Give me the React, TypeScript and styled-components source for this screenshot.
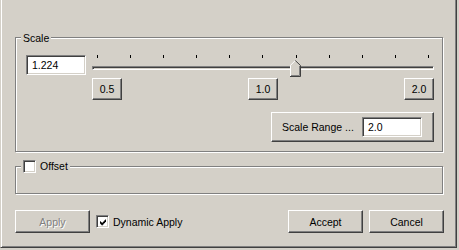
import React from 'react';
import styled, { createGlobalStyle } from 'styled-components';

const GlobalStyle = createGlobalStyle`
    html, body {
        margin: 0;
        padding: 0;
        background: #d4d0c8;
    }
    body {
        font-family: "Liberation Sans", Arial, sans-serif;
        font-size: 10.5px;
        color: #000;
    }
`;

const Frame = styled.div`
    box-sizing: border-box;
    width: 457px;
    height: 248px;
    border-left: 1px solid #d4d0c8;
    border-right: 1px solid #404040;
    border-bottom: 1px solid #404040;
    box-shadow: inset 1px 0 #fff, inset -1px -1px #808080;
    padding: 37px 0 0 14px;
`;

const Group = styled.div<{ $height?: number; $mt?: number }>`
    position: relative;
    box-sizing: border-box;
    width: 428px;
    height: ${(p) => (p.$height ? `${p.$height}px` : 'auto')};
    margin-top: ${(p) => p.$mt || 0}px;
    border: 1px solid #808080;
    box-shadow: 1px 1px 0 #fff, inset 1px 1px 0 #fff;
    padding: 17px 8px 9px 10px;
`;

const Legend = styled.div<{ $top: number }>`
    position: absolute;
    left: 5px;
    top: ${(p) => p.$top}px;
    display: flex;
    align-items: center;
    gap: 4px;
    padding: 0 2px;
    background: #d4d0c8;
    line-height: 14px;
`;

const ScaleGrid = styled.div`
    display: grid;
    grid-template-columns: 60px 1fr;
    column-gap: 6px;
`;

const Field = styled.input`
    box-sizing: border-box;
    width: 60px;
    height: 20px;
    margin: 0;
    padding: 0 0 0 5px;
    border: 1px solid;
    border-color: #808080 #fff #fff #808080;
    box-shadow: inset 1px 1px #404040, inset -1px -1px #d4d0c8;
    background: #fff;
    font: inherit;
    color: #000;
    outline: none;
`;

const Slider = styled.div`
    position: relative;
    height: 23px;
`;

const TickRow = styled.div`
    display: flex;
    justify-content: space-between;
    padding: 0 5px;
`;

const Tick = styled.span`
    width: 1px;
    height: 3px;
    background: #000;
`;

const Groove = styled.div`
    box-sizing: border-box;
    height: 4px;
    margin-top: 8px;
    border: 1px solid;
    border-color: #808080 #fff #fff #808080;
    box-shadow: inset 1px 1px #404040;
`;

const Thumb = styled.svg`
    position: absolute;
    left: 198px;
    top: 5px;
`;

const StepRow = styled.div`
    grid-column: 2;
    display: flex;
    justify-content: space-between;
`;

const Button = styled.button<{ $w: number; $h: number }>`
    box-sizing: border-box;
    width: ${(p) => p.$w}px;
    height: ${(p) => p.$h}px;
    margin: 0;
    padding: 0;
    border: 1px solid;
    border-color: #fff #404040 #404040 #fff;
    box-shadow: inset -1px -1px #808080;
    background: #d4d0c8;
    font: inherit;
    color: #000;
    &:disabled {
        color: #808080;
        text-shadow: 1px 1px 0 #fff;
    }
`;

const RangePanel = styled.div`
    grid-column: 2;
    justify-self: end;
    box-sizing: border-box;
    width: 163px;
    height: 30px;
    margin-top: 12px;
    display: flex;
    align-items: center;
    padding: 0 11px 0 10px;
    border: 1px solid;
    border-color: #fff #404040 #404040 #fff;
    box-shadow: inset -1px -1px #808080;
    & > input {
        margin-left: auto;
    }
`;

const CheckBox = styled.span`
    box-sizing: border-box;
    display: inline-flex;
    width: 13px;
    height: 13px;
    padding: 2px;
    border: 1px solid;
    border-color: #808080 #fff #fff #808080;
    box-shadow: inset 1px 1px #404040, inset -1px -1px #d4d0c8;
    background: #fff;
`;

const CheckLabel = styled.label`
    display: flex;
    align-items: center;
    gap: 4px;
    margin-left: 6px;
`;

const Footer = styled.div`
    display: flex;
    align-items: center;
    width: 429px;
    margin-top: 16px;
    & > button + button {
        margin-left: 6px;
    }
`;

const Spacer = styled.div`
    flex: 1;
`;

const Check = ({ checked }: { checked?: boolean }) => (
    <CheckBox>
        {checked && (
            <svg width="7" height="7" viewBox="0 0 7 7" style={{ margin: '1px 0 0 1px' }}>
                <path
                    d="M0 2h1v3H0zM1 3h1v3H1zM2 4h1v3H2zM3 3h1v3H3zM4 2h1v3H4zM5 1h1v3H5zM6 0h1v3H6z"
                    fill="#000"
                />
            </svg>
        )}
    </CheckBox>
);

const ticks = Array.from({ length: 11 }, (_, i) => i);

export default function App() {
    return (
        <>
            <GlobalStyle />
            <Frame>
                <Group>
                    <Legend $top={-7}>Scale</Legend>
                    <ScaleGrid>
                        <Field defaultValue="1.224" />
                        <Slider>
                            <TickRow>
                                {ticks.map((t) => (
                                    <Tick key={t} />
                                ))}
                            </TickRow>
                            <Groove />
                            <Thumb width="11" height="17" viewBox="0 0 11 17">
                                <polygon points="0,5 5,0 10,5 10,16 0,16" fill="#d4d0c8" />
                                <polyline points="0.5,16 0.5,5.3 5.3,0.5" fill="none" stroke="#fff" />
                                <polyline points="5.3,0.5 10.5,5.5 10.5,16.5 0,16.5" fill="none" stroke="#404040" />
                                <polyline points="9.5,6 9.5,15.5 1,15.5" fill="none" stroke="#808080" />
                            </Thumb>
                        </Slider>
                        <StepRow>
                            <Button $w={30} $h={22}>0.5</Button>
                            <Button $w={30} $h={22}>1.0</Button>
                            <Button $w={30} $h={22}>2.0</Button>
                        </StepRow>
                        <RangePanel>
                            <span>Scale Range ...</span>
                            <Field defaultValue="2.0" />
                        </RangePanel>
                    </ScaleGrid>
                </Group>
                <Group $height={27} $mt={14}>
                    <Legend $top={-8}>
                        <Check />
                        <span>Offset</span>
                    </Legend>
                </Group>
                <Footer>
                    <Button $w={75} $h={23} disabled>
                        Apply
                    </Button>
                    <CheckLabel>
                        <Check checked />
                        <span>Dynamic Apply</span>
                    </CheckLabel>
                    <Spacer />
                    <Button $w={75} $h={23}>Accept</Button>
                    <Button $w={75} $h={23}>Cancel</Button>
                </Footer>
            </Frame>
        </>
    );
}
